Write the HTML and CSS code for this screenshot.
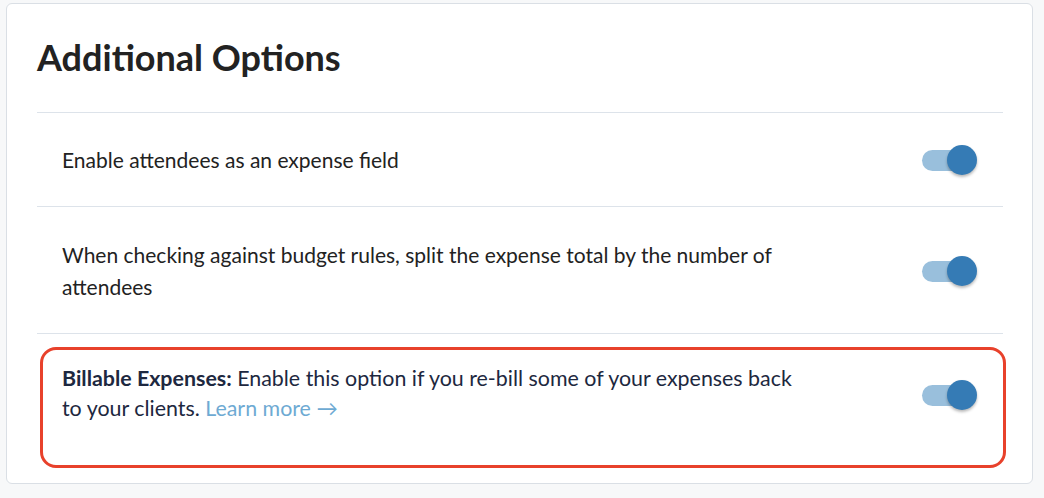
FILE: index.html
```html
<!DOCTYPE html>
<html>
<head>
<meta charset="utf-8">
<link rel="stylesheet" href="styles.css">
</head>
<body>
<section class="card">
  <h2 class="title">Additional Options</h2>
  <div class="row">
    <p class="label">Enable attendees as an expense field</p>
    <span class="toggle"><span class="track"></span><span class="thumb"></span></span>
  </div>
  <div class="row row-two">
    <p class="label">When checking against budget rules, split the expense total by the number of attendees</p>
    <span class="toggle"><span class="track"></span><span class="thumb"></span></span>
  </div>
  <div class="row row-highlight">
    <p class="label label-dark"><strong>Billable Expenses:</strong> Enable this option if you re-bill some of your expenses back to your clients. <a class="link" href="#">Learn more →</a></p>
    <span class="toggle"><span class="track"></span><span class="thumb"></span></span>
  </div>
</section>
</body>
</html>
```

FILE: styles.css
```css
html, body {
  margin: 0;
  padding: 0;
}
body {
  background: #f7f8f9;
  font-family: "Lato", "Liberation Sans", sans-serif;
  height: 498px;
  overflow: hidden;
}
.card {
  box-sizing: border-box;
  margin: 3px 11px 0 6px;
  height: 481px;
  background: #fff;
  border: 1px solid #dadfe5;
  border-radius: 6px;
  padding: 0 29px 16px 30px;
}
.title {
  margin: 0;
  font-size: 36px;
  font-weight: 700;
  color: #222;
  line-height: 44px;
  padding: 31px 0 33px;
  border-bottom: 1px solid #dde3ea;
}
.row {
  display: flex;
  align-items: center;
  justify-content: space-between;
  padding: 31px 26px 30px 25px;
  border-bottom: 1px solid #dde3ea;
}
.row-two {
  padding-top: 32px;
}
.label {
  margin: 0;
  max-width: 740px;
  font-size: 21px;
  line-height: 32px;
  color: #222;
}
.label-dark {
  color: #1d2840;
  font-size: 21.4px;
  line-height: 30px;
}
.label-dark strong {
  font-weight: 700;
}
.link {
  color: #6eaad3;
  text-decoration: none;
}
.row-highlight {
  border: 3px solid #e8412b;
  border-radius: 16px;
  margin: 13px -3px 0 3px;
  padding: 13px 26px 42px 19px;
  align-items: flex-start;
}
.row-highlight .toggle {
  margin-top: 17px;
}
.toggle {
  position: relative;
  flex: none;
  width: 55px;
  height: 30px;
}
.track {
  position: absolute;
  left: 0;
  top: 5px;
  width: 50px;
  height: 21px;
  border-radius: 11px;
  background: #99bfdc;
}
.thumb {
  position: absolute;
  right: 0;
  top: 0;
  width: 30px;
  height: 30px;
  border-radius: 50%;
  background: #357bb5;
  box-shadow: 0 2px 3px rgba(0, 0, 0, 0.28);
}
```
